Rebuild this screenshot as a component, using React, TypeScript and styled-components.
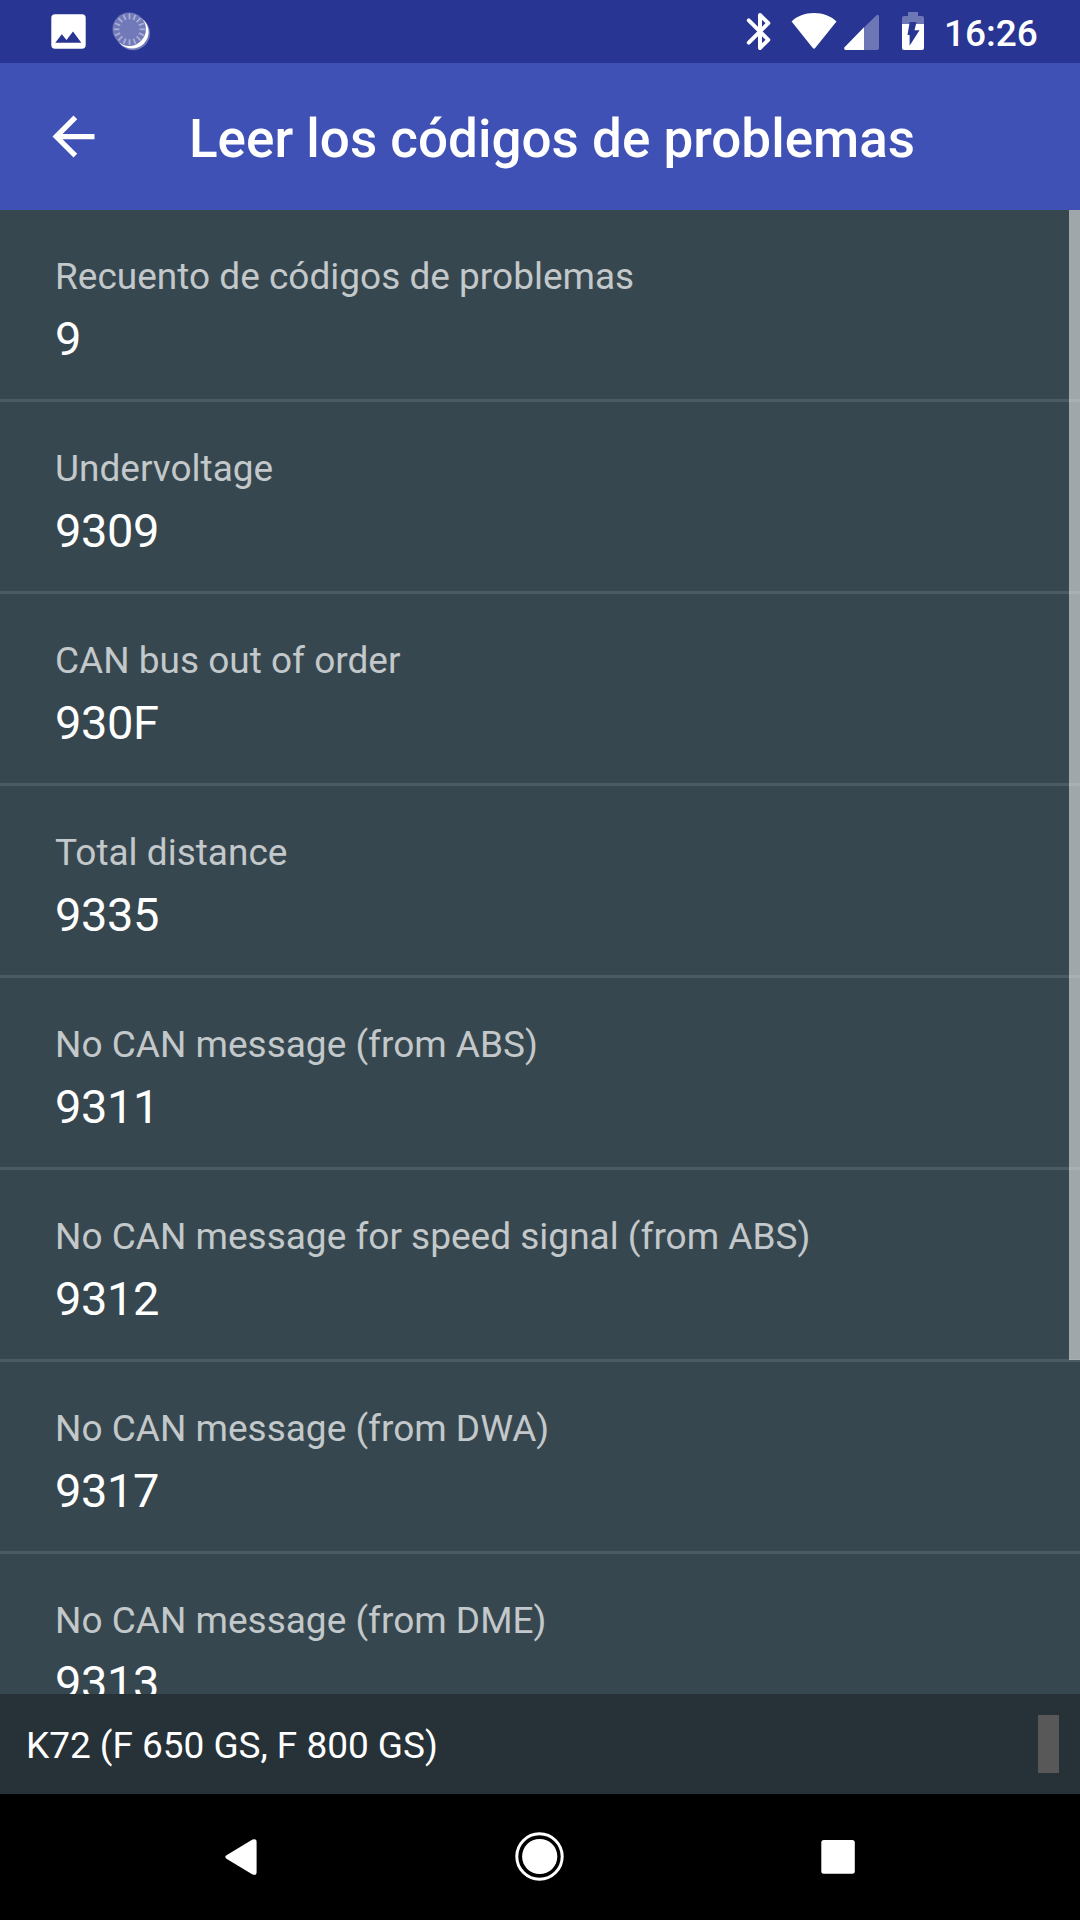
import React from "react";
import styled, { createGlobalStyle } from "styled-components";

const GlobalStyle = createGlobalStyle`
  * { box-sizing: border-box; }
  body { margin: 0; background: #000; font-family: Roboto, "Noto Sans", sans-serif; }
`;

const Screen = styled.div`
  width: 1080px;
  height: 1920px;
  display: flex;
  flex-direction: column;
  overflow: hidden;
  color: #fff;
`;

const StatusBar = styled.header`
  height: 63px;
  flex: none;
  display: flex;
  justify-content: space-between;
  background: #283593;
`;

const StatusGroup = styled.div`
  display: flex;
`;

const Clock = styled.time`
  width: 138px;
  height: 63px;
  padding-left: 2px;
  font-size: 37px;
  font-weight: 500;
  line-height: 67px;
  white-space: nowrap;
`;

const Toolbar = styled.div`
  height: 147px;
  flex: none;
  display: flex;
  align-items: center;
  background: #3f51b5;
`;

const BackButton = styled.button`
  width: 147px;
  height: 147px;
  padding: 0;
  border: 0;
  background: none;
  display: flex;
  align-items: center;
  justify-content: center;
`;

const Title = styled.h1`
  margin: 0;
  padding: 4px 0 0 42px;
  font-size: 53px;
  font-weight: 500;
  line-height: 62px;
  white-space: nowrap;
`;

const ListArea = styled.main`
  height: 1484px;
  flex: none;
  display: flex;
  overflow: hidden;
  position: relative;
  background: #37474f;
`;

const List = styled.ul`
  flex: 1;
  margin: 0;
  padding: 0;
  list-style: none;
`;

const Row = styled.li`
  height: 192px;
  padding: 45px 55px 0;
  border-bottom: 3px solid #4b5b62;
`;

const Label = styled.div`
  font-size: 37px;
  line-height: 43px;
  color: #c3c8ca;
  white-space: nowrap;
`;

const Value = styled.div`
  margin-top: 13px;
  font-size: 47px;
  line-height: 55px;
  letter-spacing: -0.4px;
`;

const ScrollThumb = styled.div`
  position: absolute;
  top: 0;
  right: 0;
  width: 11px;
  height: 1150px;
  background: rgba(255, 255, 255, 0.52);
`;

const Footer = styled.footer`
  height: 100px;
  flex: none;
  display: flex;
  align-items: center;
  justify-content: space-between;
  padding: 0 21px 0 26px;
  background: #263238;
`;

const Vehicle = styled.span`
  padding-top: 3px;
  font-size: 37px;
  line-height: 44px;
  letter-spacing: -0.04px;
`;

const Indicator = styled.span`
  width: 21px;
  height: 58px;
  background: #585858;
`;

const NavBar = styled.nav`
  flex: 1;
  display: flex;
  background: #000;
`;

const codes = [
  ["Recuento de códigos de problemas", "9"],
  ["Undervoltage", "9309"],
  ["CAN bus out of order", "930F"],
  ["Total distance", "9335"],
  ["No CAN message (from ABS)", "9311"],
  ["No CAN message for speed signal (from ABS)", "9312"],
  ["No CAN message (from DWA)", "9317"],
  ["No CAN message (from DME)", "9313"],
];

const ticks = Array.from({ length: 16 }, (_, i) => i * 22.5);

const Notifications = () => (
  <svg width="160" height="63" viewBox="0 0 160 63" fill="#fff">
    <path fillRule="evenodd" d="M55 14.3H82a3.7 3.7 0 0 1 3.7 3.7V45a3.7 3.7 0 0 1-3.7 3.7H55a3.7 3.7 0 0 1-3.7-3.7V18a3.7 3.7 0 0 1 3.7-3.7ZM55.3 42.8H81.3L73 31.6 66.5 40 61.8 34.3Z" />
    <circle cx="133" cy="33.2" r="17" fill="#7179b8" />
    <circle cx="132" cy="32" r="16.6" />
    <circle cx="129.2" cy="29.2" r="16.7" fill="#7179b8" />
    <g stroke="#a9aed5" strokeWidth="1.8">
      {ticks.map((a) => (
        <path key={a} d="M129.5 13.6v5.6" transform={`rotate(${a} 129.5 29.3)`} />
      ))}
    </g>
  </svg>
);

const SystemIcons = () => (
  <svg width="202" height="63" viewBox="740 0 202 63" fill="#fff">
    <path d="M748.8 20.3 768.3 39.8 760 48V15L768.3 23.2 748.8 42.7" fill="none" stroke="#fff" strokeWidth="4" strokeLinejoin="round" strokeLinecap="round" />
    <path d="M791.6 21.5C797 16 805 13 814 13S831 16 836.5 21.5L815.2 48Q814 49.5 812.8 48Z" />
    <path d="M877 14.8Q879 14.5 879 17V48a2 2 0 0 1-2 2H864V27.5Z" opacity=".33" />
    <path d="M864 27.3V50H845.5Q843.5 49.5 844.3 47.5Z" />
    <path d="M902 24V18a2 2 0 0 1 2-2h4v-4h10v4h4a2 2 0 0 1 2 2v6Z" opacity=".33" />
    <path d="M902 24H924V48a2 2 0 0 1-2 2H904a2 2 0 0 1-2-2Z" />
    <path d="M909.7 22H916.5L914.5 30.3H919.5L909.6 45.7V35H907.5Z" fill="#283593" />
  </svg>
);

const BackArrow = () => (
  <svg width="63" height="63" viewBox="0 0 24 24" fill="#fff">
    <path d="M20 11H7.83l5.59-5.59L12 4l-8 8 8 8 1.41-1.41L7.83 13H20v-2z" />
  </svg>
);

const NavIcons = () => (
  <svg width="1080" height="126" viewBox="0 1794 1080 126" fill="#fff">
    <path d="M226.5 1855.3 252.5 1839.6Q256.6 1838 256.6 1842V1872Q256.6 1876 252.5 1874.4L226.5 1858.7Q224 1857 226.5 1855.3Z" />
    <circle cx="539.7" cy="1856.5" r="17.6" />
    <circle cx="539.5" cy="1856.5" r="22.7" fill="none" stroke="#fff" strokeWidth="3" />
    <rect x="821.3" y="1840" width="33.5" height="33.8" rx="2.5" />
  </svg>
);

export default function App() {
  return (
    <>
      <GlobalStyle />
      <Screen>
        <StatusBar>
          <Notifications />
          <StatusGroup>
            <SystemIcons />
            <Clock>16:26</Clock>
          </StatusGroup>
        </StatusBar>
        <Toolbar>
          <BackButton aria-label="Atrás">
            <BackArrow />
          </BackButton>
          <Title>Leer los códigos de problemas</Title>
        </Toolbar>
        <ListArea>
          <List>
            {codes.map(([label, value]) => (
              <Row key={value}>
                <Label>{label}</Label>
                <Value>{value}</Value>
              </Row>
            ))}
          </List>
          <ScrollThumb />
        </ListArea>
        <Footer>
          <Vehicle>K72 (F 650 GS, F 800 GS)</Vehicle>
          <Indicator />
        </Footer>
        <NavBar>
          <NavIcons />
        </NavBar>
      </Screen>
    </>
  );
}
